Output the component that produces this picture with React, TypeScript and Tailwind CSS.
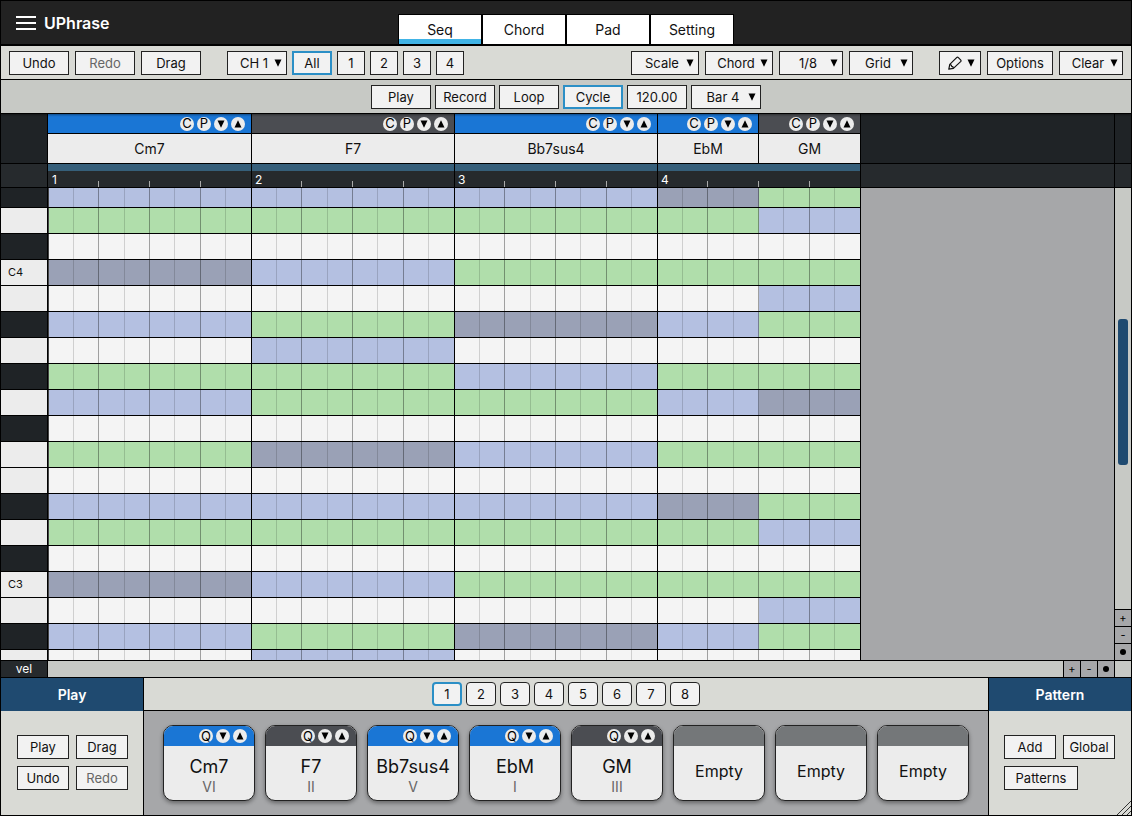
import React, { useState } from 'react';
import clsx from 'clsx';

type Chord = {
  name: string;
  degree: string;
  major: boolean;
  cells: number;
  root: number;
  tones: number[];
  scale: number[];
};

const chords: Chord[] = [
  { name: 'Cm7', degree: 'VI', major: true, cells: 8, root: 0, tones: [3, 7, 10], scale: [2, 5, 8] },
  { name: 'F7', degree: 'II', major: false, cells: 8, root: 5, tones: [0, 3, 9], scale: [2, 7, 8, 10] },
  { name: 'Bb7sus4', degree: 'V', major: true, cells: 8, root: 10, tones: [3, 5, 8], scale: [0, 2, 7] },
  { name: 'EbM', degree: 'I', major: true, cells: 4, root: 3, tones: [7, 10], scale: [0, 2, 5, 8] },
  { name: 'GM', degree: 'III', major: false, cells: 4, root: 7, tones: [2, 11], scale: [0, 3, 5, 8, 10] },
];

const headWidths = ['w-[204px]', 'w-[203px]', 'w-[203px]', 'w-[101px]', 'w-[102px]'];

// one entry per eighth note, four bars
const steps = chords.flatMap(chord => Array.from({ length: chord.cells }, () => chord));

const TOP_PITCH = 63;
const pitches = Array.from({ length: 19 }, (_, i) => TOP_PITCH - i);
const blackKeys = [1, 3, 6, 8, 10];

const cellColor = (chord: Chord, pitch: number) => {
  const pc = pitch % 12;
  if (pc === chord.root) return 'bg-[#9aa1b6]';
  if (chord.tones.includes(pc)) return 'bg-[#b4c0e1]';
  if (chord.scale.includes(pc)) return 'bg-[#b0deab]';
  return 'bg-[#f4f4f4]';
};

const barColumns = 'grid grid-cols-[25px_25px_26px_25px_25px_26px_25px_26px] w-[203px] shrink-0';

const buttonBase = 'h-6 bg-[#f2f2f2] text-[13px] leading-none text-center shrink-0';

interface ToolButtonProps {
  width: string;
  active?: boolean;
  muted?: boolean;
  rounded?: boolean;
  onClick?: () => void;
  label?: string;
  children: React.ReactNode;
}

const ToolButton: React.FC<ToolButtonProps> = ({ width, active, muted, rounded, onClick, label, children }) => (
  <button
    type="button"
    onClick={onClick}
    aria-label={label}
    className={clsx(
      buttonBase,
      width,
      active ? 'border-2 border-[#2b8fc6]' : 'border border-[#222]',
      muted ? 'text-[#666]' : 'text-[#111]',
      rounded && 'rounded'
    )}
  >
    {children}
  </button>
);

const Arrow: React.FC<{ up?: boolean }> = ({ up }) => (
  <svg viewBox="0 0 8 8" className={clsx('size-2', up && 'rotate-180')} aria-hidden="true">
    <path d="M0.5 0.5h7L4 7.8z" fill="#000" />
  </svg>
);

const DropDown: React.FC<{ label: string; options: string[]; width: string }> = ({ label, options, width }) => (
  <div className={clsx('relative shrink-0', width)}>
    <select
      aria-label={label}
      className="block h-6 w-full appearance-none border border-[#222] bg-[#f2f2f2] pr-1.5 text-center text-[13px] leading-none text-[#111]"
    >
      {options.map(option => (
        <option key={option}>{option}</option>
      ))}
    </select>
    <span className="pointer-events-none absolute inset-y-0 right-[5px] flex items-center">
      <Arrow />
    </span>
  </div>
);

const RoundButton: React.FC<{ label: string; children: React.ReactNode }> = ({ label, children }) => (
  <button
    type="button"
    aria-label={label}
    className="flex size-3.5 shrink-0 items-center justify-center rounded-full bg-[#ececec] text-[13px] leading-none text-black"
  >
    {children}
  </button>
);

const VoicingButtons: React.FC = () => (
  <>
    <RoundButton label="Down"><Arrow /></RoundButton>
    <RoundButton label="Up"><Arrow up /></RoundButton>
  </>
);

const ZoomButton: React.FC<{ label: string; className: string; children: React.ReactNode }> = ({ label, className, children }) => (
  <button
    type="button"
    aria-label={label}
    className={clsx('flex shrink-0 items-center justify-center border-black bg-[#a6a7a9] text-[11px] leading-none text-black', className)}
  >
    {children}
  </button>
);

const Dot: React.FC = () => <span className="size-1.5 rounded-full bg-black" />;

const Header: React.FC = () => {
  const [tab, setTab] = useState('Seq');
  return (
    <header className="grid h-[45px] shrink-0 grid-cols-[1fr_auto_1fr] border-b-2 border-black bg-[#222]">
      <div className="flex items-center gap-2 pl-[15px]">
        <button type="button" aria-label="Menu" className="flex w-5 flex-col gap-1">
          <span className="h-0.5 bg-white" />
          <span className="h-0.5 bg-white" />
          <span className="h-0.5 bg-white" />
        </button>
        <h1 className="text-base font-semibold text-white">UPhrase</h1>
      </div>
      <nav className="flex self-end">
        {['Seq', 'Chord', 'Pad', 'Setting'].map(name => (
          <button
            key={name}
            type="button"
            onClick={() => setTab(name)}
            className={clsx(
              'h-[30px] w-[84px] border border-b-0 border-black bg-white text-sm text-[#111]',
              tab === name && 'shadow-[inset_0_-5px_0_#41b4e6]'
            )}
          >
            {name}
          </button>
        ))}
      </nav>
    </header>
  );
};

const Toolbar: React.FC = () => {
  const [channel, setChannel] = useState('All');
  return (
    <div className="flex h-[34px] shrink-0 items-start justify-between border-b border-black bg-[#d9dad5] px-2 pt-[5px]">
      <div className="flex gap-[26px]">
        <div className="flex gap-1.5">
          <ToolButton width="w-[60px]">Undo</ToolButton>
          <ToolButton width="w-[60px]" muted>Redo</ToolButton>
          <ToolButton width="w-[60px]">Drag</ToolButton>
        </div>
        <div className="flex gap-[5px]">
          <DropDown label="Channel" options={['CH 1', 'CH 2', 'CH 3', 'CH 4']} width="w-[60px]" />
          {['All', '1', '2', '3', '4'].map(name => (
            <ToolButton
              key={name}
              width={name === 'All' ? 'w-10' : 'w-7'}
              active={channel === name}
              onClick={() => setChannel(name)}
            >
              {name}
            </ToolButton>
          ))}
        </div>
      </div>
      <div className="flex gap-[26px]">
        <div className="flex gap-1.5">
          <DropDown label="Scale" options={['Scale']} width="w-[68px]" />
          <DropDown label="Chord" options={['Chord']} width="w-[68px]" />
          <DropDown label="Note length" options={['1/8', '1/4', '1/16']} width="w-16" />
          <DropDown label="Grid" options={['Grid']} width="w-16" />
        </div>
        <div className="flex gap-1.5">
          <ToolButton width="w-[42px]" label="Edit tool">
            <span className="flex items-center justify-between pr-[5px] pl-2">
              <svg viewBox="0 0 14 14" className="size-3.5" fill="none" stroke="#111" strokeWidth="1.2" strokeLinejoin="round" aria-hidden="true">
                <path d="M0.8 13.2l1-4.8L8.6 1.6q0.9-0.9 1.8 0l2.2 2.2q0.9 0.9 0 1.8L5.4 12.4z" />
                <path d="M1.8 8.6l1.4 0.4 0.5 1.4 1.3 0.5 0.4 1.4" />
              </svg>
              <Arrow />
            </span>
          </ToolButton>
          <ToolButton width="w-[66px]">Options</ToolButton>
          <DropDown label="Clear" options={['Clear']} width="w-16" />
        </div>
      </div>
    </div>
  );
};

const Transport: React.FC = () => {
  const [cycle, setCycle] = useState(true);
  const [tempo, setTempo] = useState('120.00');
  return (
    <div className="relative flex h-[34px] shrink-0 items-start justify-center gap-1 border-b border-black bg-[#c7c9c5] pt-[5px] shadow-[0_1px_2px_rgba(0,0,0,0.4)]">
      <ToolButton width="w-[60px]">Play</ToolButton>
      <ToolButton width="w-[60px]">Record</ToolButton>
      <ToolButton width="w-[60px]">Loop</ToolButton>
      <ToolButton width="w-[60px]" active={cycle} onClick={() => setCycle(!cycle)}>Cycle</ToolButton>
      <input
        type="text"
        aria-label="Tempo"
        value={tempo}
        onChange={e => setTempo(e.target.value)}
        className={clsx(buttonBase, 'w-[60px] border border-[#222] text-[#111]')}
      />
      <DropDown label="Bars" options={['Bar 4', 'Bar 8']} width="w-[70px]" />
    </div>
  );
};

const ChordHeads: React.FC = () => (
  <div className="flex h-[50px] shrink-0 border-b border-black bg-[#1f2326]">
    <div className="w-[47px] shrink-0 border-r border-black" />
    {chords.map((chord, i) => (
      <div key={chord.name} className={clsx('shrink-0 border-r border-black', headWidths[i])}>
        <div
          className={clsx(
            'flex h-5 items-center justify-end gap-[3px] border-b border-black pr-1.5',
            chord.major ? 'bg-[#1a76d5]' : 'bg-[#4b4d52]'
          )}
        >
          <RoundButton label="Copy">C</RoundButton>
          <RoundButton label="Paste">P</RoundButton>
          <VoicingButtons />
        </div>
        <div className="flex h-[29px] items-center justify-center bg-[#ececec] text-sm text-[#111]">{chord.name}</div>
      </div>
    ))}
    <div className="flex-1" />
    <div className="w-[17px] shrink-0 border-l border-black" />
  </div>
);

const Ruler: React.FC = () => (
  <div className="flex h-6 shrink-0 border-b border-black bg-[#262a2d]">
    <div className="w-[47px] shrink-0 border-r border-black" />
    <div className="h-[7px] w-px shrink-0 bg-[#365f7a]" />
    {[1, 2, 3, 4].map(bar => (
      <div key={bar} className="relative w-[203px] shrink-0 border-r border-black">
        <div className="h-[7px] bg-[#365f7a]" />
        <span className="absolute top-2 left-[3px] text-[12px] leading-4 text-white">{bar}</span>
        <div className={clsx(barColumns, 'h-4')}>
          {[0, 1, 2, 3, 4, 5, 6].map(i => (
            <span key={i} className={clsx(i % 2 === 1 && 'h-1.5 self-end border-r border-[#aaa]')} />
          ))}
        </div>
      </div>
    ))}
    <div className="flex-1" />
    <div className="w-[17px] shrink-0 border-l border-black" />
  </div>
);

const PianoRoll: React.FC = () => (
  <div className="flex min-h-0 flex-1 bg-[#a6a7a9]">
    <div className="min-w-0 flex-1 overflow-hidden">
      {pitches.map((pitch, row) => (
        <div key={pitch} className={clsx('flex', row === 0 ? 'h-5' : 'h-[26px]')}>
          <div
            className={clsx(
              'flex w-[47px] shrink-0 items-center border-r border-b border-black pl-[7px] text-[11px] text-[#111]',
              blackKeys.includes(pitch % 12) ? 'bg-[#1f2326]' : 'bg-[#ececec]'
            )}
          >
            {pitch % 12 === 0 && `C${pitch / 12 - 1}`}
          </div>
          <div className="w-px shrink-0 border-b border-black bg-[#444]" />
          {[0, 1, 2, 3].map(bar => (
            <div key={bar} className={clsx(barColumns, 'border-b border-black')}>
              {steps.slice(bar * 8, bar * 8 + 8).map((chord, i) => (
                <div
                  key={i}
                  className={clsx(
                    'border-r',
                    cellColor(chord, pitch),
                    i === 7 ? 'border-black' : i % 2 === 1 ? 'border-black/35' : 'border-black/15'
                  )}
                />
              ))}
            </div>
          ))}
        </div>
      ))}
    </div>
    <div className="flex w-[17px] shrink-0 flex-col border-l border-black bg-[#c7c9c5]">
      <div className="flex flex-1 flex-col items-center">
        <div className="grow-[131]" />
        <div className="w-2.5 grow-[146] rounded-[3px] bg-[#1f4a70]" />
        <div className="grow-[144]" />
      </div>
      <ZoomButton label="Zoom in vertically" className="h-[17px] border-t">+</ZoomButton>
      <ZoomButton label="Zoom out vertically" className="h-[17px] border-t">-</ZoomButton>
      <ZoomButton label="Reset vertical zoom" className="h-[17px] border-t"><Dot /></ZoomButton>
    </div>
  </div>
);

const VelocityBar: React.FC = () => (
  <div className="flex h-[18px] shrink-0 border-y border-black bg-[#c7c9c5]">
    <button type="button" className="w-[47px] shrink-0 border-r border-black bg-[#262a2d] text-[12px] leading-none text-white">
      vel
    </button>
    <div className="flex-1" />
    <ZoomButton label="Zoom in horizontally" className="w-[17px] border-l">+</ZoomButton>
    <ZoomButton label="Zoom out horizontally" className="w-[17px] border-l">-</ZoomButton>
    <ZoomButton label="Reset horizontal zoom" className="w-[17px] border-l"><Dot /></ZoomButton>
    <div className="w-[17px] shrink-0 border-l border-black" />
  </div>
);

const Pad: React.FC<{ chord?: Chord }> = ({ chord }) => (
  <div className="flex h-[76px] w-[92px] shrink-0 flex-col overflow-hidden rounded-[10px] border border-[#222] bg-[#ececec] text-[#111] shadow-[0_2px_4px_rgba(0,0,0,0.4)]">
    <div
      className={clsx(
        'flex h-5 shrink-0 items-center justify-end gap-[3px] pr-[7px]',
        !chord ? 'bg-[#747779]' : chord.major ? 'bg-[#1a76d5]' : 'bg-[#4b4d52]'
      )}
    >
      {chord && (
        <>
          <RoundButton label={`Quick edit ${chord.name}`}>Q</RoundButton>
          <VoicingButtons />
        </>
      )}
    </div>
    <div className={clsx('flex flex-1 flex-col items-center justify-center', chord ? 'pt-2' : 'pb-1')}>
      {chord ? (
        <>
          <span className="text-[18px] leading-5">{chord.name}</span>
          <span className="text-sm leading-5 text-[#666]">{chord.degree}</span>
        </>
      ) : (
        <span className="text-base leading-6">Empty</span>
      )}
    </div>
  </div>
);

const BottomPanel: React.FC = () => {
  const [page, setPage] = useState(1);
  return (
    <div className="flex h-[137px] shrink-0 bg-[#d9dad5]">
      <section className="w-[143px] shrink-0 border-r border-black">
        <h2 className="flex h-[33px] items-center justify-center bg-[#1f4a70] text-sm font-semibold text-white">Play</h2>
        <div className="flex flex-wrap gap-[7px] pt-6 pl-4">
          <ToolButton width="w-[52px]">Play</ToolButton>
          <ToolButton width="w-[52px]">Drag</ToolButton>
          <ToolButton width="w-[52px]">Undo</ToolButton>
          <ToolButton width="w-[52px]" muted>Redo</ToolButton>
        </div>
      </section>
      <section className="flex min-w-0 flex-1 flex-col">
        <div className="flex h-[33px] shrink-0 items-center justify-center gap-1 border-b border-black">
          {[1, 2, 3, 4, 5, 6, 7, 8].map(n => (
            <ToolButton key={n} width="w-[30px]" rounded active={page === n} onClick={() => setPage(n)}>
              {n}
            </ToolButton>
          ))}
        </div>
        <div className="flex flex-1 items-center justify-center gap-2.5 bg-[#a6a7a9]">
          {chords.map(chord => (
            <Pad key={chord.name} chord={chord} />
          ))}
          <Pad />
          <Pad />
          <Pad />
        </div>
      </section>
      <section className="relative w-[143px] shrink-0 border-l border-black">
        <h2 className="flex h-[33px] items-center justify-center bg-[#1f4a70] text-sm font-semibold text-white">Pattern</h2>
        <div className="flex flex-wrap gap-[7px] pt-6 pl-[15px]">
          <ToolButton width="w-[52px]">Add</ToolButton>
          <ToolButton width="w-[52px]">Global</ToolButton>
          <ToolButton width="w-[74px]">Patterns</ToolButton>
        </div>
        <svg viewBox="0 0 14 14" className="absolute right-0 bottom-0 size-3.5" stroke="#333" strokeWidth="1" aria-hidden="true">
          <path d="M0 14L14 0M5 14L14 5M10 14L14 10" />
        </svg>
      </section>
    </div>
  );
};

const App: React.FC = () => (
  <div className="flex h-screen flex-col overflow-hidden border border-black font-['Inter',sans-serif]">
    <Header />
    <Toolbar />
    <Transport />
    <ChordHeads />
    <Ruler />
    <PianoRoll />
    <VelocityBar />
    <BottomPanel />
  </div>
);

export default App;
